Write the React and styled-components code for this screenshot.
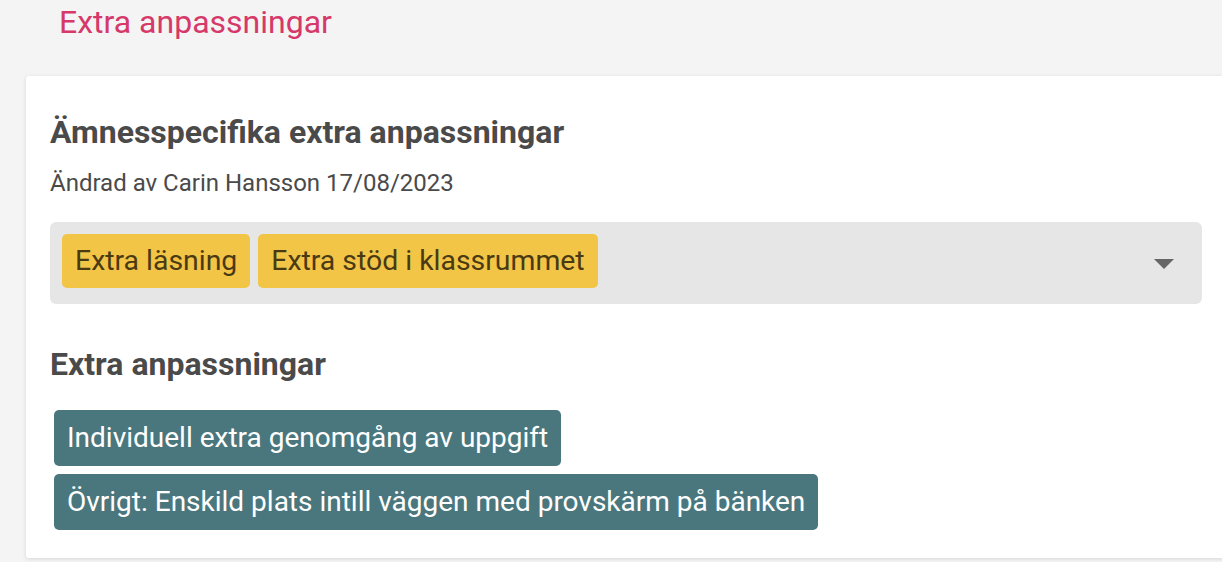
import React from 'react';
import styled, { createGlobalStyle } from 'styled-components';

const GlobalStyle = createGlobalStyle`
  html, body {
    margin: 0;
    padding: 0;
    background: #f4f4f4;
    font-family: Roboto, 'Liberation Sans', sans-serif;
    overflow: hidden;
  }
`;

const Page = styled.div`
  width: 1222px;
  height: 562px;
  padding: 0 0 0 26px;
  box-sizing: border-box;
`;

const PageTitle = styled.h1`
  margin: 0;
  padding: 2px 0 0 33px;
  font-size: 32px;
  font-weight: 400;
  line-height: 40px;
  color: #d6386a;
`;

const Card = styled.section`
  margin-top: 34px;
  width: 1220px;
  height: 482px;
  box-sizing: border-box;
  background: #fff;
  border-radius: 3px 0 0 3px;
  box-shadow: 0 1px 4px rgba(0, 0, 0, 0.12);
  padding: 37px 0 0 24px;
`;

const Heading = styled.h2`
  margin: 0;
  font-size: 32px;
  font-weight: 700;
  line-height: 38px;
  color: #4a4a4a;
`;

const Meta = styled.div`
  margin-top: 18px;
  font-size: 24px;
  line-height: 28px;
  color: #4a4a4a;
`;

const Select = styled.div`
  margin-top: 25px;
  width: 1152px;
  height: 82px;
  box-sizing: border-box;
  background: #e6e6e6;
  border-radius: 6px;
  padding: 12px 28px 0 12px;
  display: flex;
  align-items: flex-start;
  gap: 8px;
`;

const Chip = styled.span`
  display: inline-block;
  box-sizing: border-box;
  height: ${(p) => (p.tone === 'teal' ? 56 : 54)}px;
  padding: ${(p) => (p.tone === 'teal' ? '11px' : '10px')} 13px 0;
  border-radius: 5px;
  font-size: ${(p) => (p.tone === 'teal' ? 28 : 28.4)}px;
  line-height: normal;
  white-space: nowrap;
  background: ${(p) => (p.tone === 'teal' ? '#4a777d' : '#f2c546')};
  color: ${(p) => (p.tone === 'teal' ? '#ffffff' : '#4a3a14')};
`;

const Caret = styled.svg`
  margin: 25px 0 0 auto;
  flex: none;
`;

const SecondHeading = styled(Heading)`
  margin-top: 41px;
`;

const ChipList = styled.div`
  margin-top: 27px;
  padding-left: 4px;
  display: flex;
  flex-direction: column;
  align-items: flex-start;
  gap: 8px;
`;

export default function App() {
  return (
    <Page>
      <GlobalStyle />
      <PageTitle>Extra anpassningar</PageTitle>
      <Card>
        <Heading>Ämnesspecifika extra anpassningar</Heading>
        <Meta>Ändrad av Carin Hansson 17/08/2023</Meta>
        <Select>
          <Chip>Extra läsning</Chip>
          <Chip>Extra stöd i klassrummet</Chip>
          <Caret width="20" height="10" viewBox="0 0 20 10">
            <path d="M0 0 L20 0 L10 10 Z" fill="#666" />
          </Caret>
        </Select>
        <SecondHeading>Extra anpassningar</SecondHeading>
        <ChipList>
          <Chip tone="teal">Individuell extra genomgång av uppgift</Chip>
          <Chip tone="teal">Övrigt: Enskild plats intill väggen med provskärm på bänken</Chip>
        </ChipList>
      </Card>
    </Page>
  );
}
